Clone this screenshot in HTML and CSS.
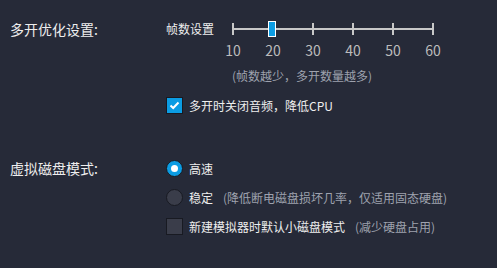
FILE: index.html
```html
<!DOCTYPE html>
<html lang="zh-CN">
<head>
    <meta charset="UTF-8">
    <title>多开设置</title>
    <link rel="stylesheet" href="styles.css">
</head>
<body>
<div class="page">
    <div class="section">
        <div class="section-label">多开优化设置:</div>
        <div class="section-body">
            <div class="slider-row">
                <span class="slider-title">帧数设置</span>
                <div class="slider">
                    <div class="track"></div>
                    <div class="ticks">
                        <i></i><i></i><i></i><i></i><i></i><i></i>
                    </div>
                    <div class="thumb"></div>
                </div>
            </div>
            <div class="scale">
                <span>10</span><span>20</span><span>30</span><span>40</span><span>50</span><span>60</span>
            </div>
            <div class="slider-hint">(帧数越少，多开数量越多)</div>
            <div class="option first">
                <span class="check on">
                    <svg width="11" height="9" viewBox="0 0 11 9"><polyline points="1.5,4.5 4.2,7 9.5,1.5" fill="none" stroke="#fff" stroke-width="2"/></svg>
                </span>
                <span>多开时关闭音频，降低CPU</span>
            </div>
        </div>
    </div>

    <div class="section disk">
        <div class="section-label">虚拟磁盘模式:</div>
        <div class="section-body">
            <div class="option">
                <span class="radio on"></span>
                <span>高速</span>
            </div>
            <div class="option">
                <span class="radio"></span>
                <span>稳定</span>
                <span class="hint">(降低断电磁盘损坏几率，仅适用固态硬盘)</span>
            </div>
            <div class="option">
                <span class="check"></span>
                <span>新建模拟器时默认小磁盘模式</span>
                <span class="hint">(减少硬盘占用)</span>
            </div>
        </div>
    </div>
</div>
</body>
</html>
```

FILE: styles.css
```css
body {
    margin: 0;
    background-color: #262a38;
    color: #eeeeee;
    font-family: "Noto Sans CJK SC", "Noto Sans", sans-serif;
}
.page {
    padding: 20px 0 0 10px;
}
.section {
    display: grid;
    grid-template-columns: 156px 1fr;
}
.section.disk {
    margin-top: 34px;
}
.section-label {
    font-size: 14px;
    line-height: 18px;
}
.slider-row {
    display: flex;
    align-items: center;
    height: 18px;
}
.slider-title {
    width: 66px;
    font-size: 12px;
    line-height: 18px;
}
.slider {
    position: relative;
    width: 202px;
    height: 16px;
}
.track {
    position: absolute;
    left: 0;
    right: 0;
    top: 7px;
    height: 2px;
    background-color: #c8c8c8;
}
.ticks {
    display: flex;
    justify-content: space-between;
    height: 12px;
    margin-top: 2px;
}
.ticks i {
    width: 2px;
    background-color: #c8c8c8;
}
.thumb {
    position: absolute;
    left: 36px;
    top: 0;
    width: 8px;
    height: 16px;
    box-sizing: border-box;
    border: 1px solid #ffffff;
    background-color: #0b9ce3;
}
.scale {
    display: flex;
    margin: 3px 0 0 47px;
    font-size: 14px;
    line-height: 18px;
    color: #bcbcbc;
}
.scale span {
    width: 40px;
    text-align: center;
}
.slider-hint {
    margin: 8px 0 0 66px;
    font-size: 12px;
    line-height: 18px;
    color: #9ea2ae;
}
.option {
    display: flex;
    align-items: center;
    height: 18px;
    font-size: 12px;
    margin-bottom: 11px;
}
.option.first {
    margin-top: 11px;
}
.option .hint {
    margin-left: 10px;
    font-size: 12px;
    color: #9ea2ae;
}
.check, .radio {
    width: 17px;
    height: 17px;
    box-sizing: border-box;
    margin-right: 6px;
    border: 1px solid #181a22;
    background-color: #3a3d4a;
    display: flex;
    align-items: center;
    justify-content: center;
}
.radio {
    border-radius: 50%;
}
.check.on, .radio.on {
    background-color: #0b9ce3;
}
.radio.on::after {
    content: "";
    width: 7px;
    height: 7px;
    border-radius: 50%;
    background-color: #ffffff;
}
```
